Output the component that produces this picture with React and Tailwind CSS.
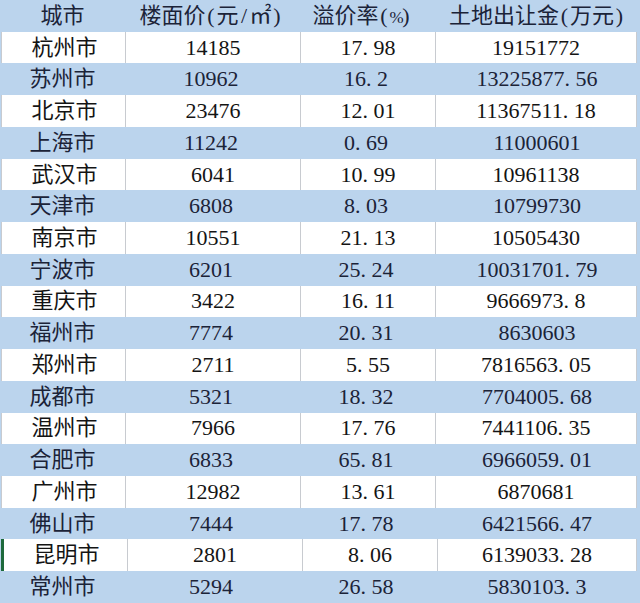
const rows = [
  ['杭州市', '14185', '17.98', '19151772'],
  ['苏州市', '10962', '16.2', '13225877.56'],
  ['北京市', '23476', '12.01', '11367511.18'],
  ['上海市', '11242', '0.69', '11000601'],
  ['武汉市', '6041', '10.99', '10961138'],
  ['天津市', '6808', '8.03', '10799730'],
  ['南京市', '10551', '21.13', '10505430'],
  ['宁波市', '6201', '25.24', '10031701.79'],
  ['重庆市', '3422', '16.11', '9666973.8'],
  ['福州市', '7774', '20.31', '8630603'],
  ['郑州市', '2711', '5.55', '7816563.05'],
  ['成都市', '5321', '18.32', '7704005.68'],
  ['温州市', '7966', '17.76', '7441106.35'],
  ['合肥市', '6833', '65.81', '6966059.01'],
  ['广州市', '12982', '13.61', '6870681'],
  ['佛山市', '7444', '17.78', '6421566.47'],
  ['昆明市', '2801', '8.06', '6139033.28'],
  ['常州市', '5294', '26.58', '5830103.3'],
];

/* half-width cell, like the SimSun glyphs in the sheet */
const Half = ({ children, className = '' }) => (
  <span className={`inline-block w-[11px] text-center ${className}`}>{children}</span>
);

/* numbers: the period takes a full half-width cell */
const Num = ({ value }) => {
  const [a, b] = value.split('.');
  return (
    <span>
      {a}
      {b !== undefined && (
        <>
          <span className="inline-block w-[11px] text-left">.</span>
          {b}
        </>
      )}
    </span>
  );
};

const Row = ({ cells, blue, selected }) => {
  const text = blue ? 'text-[#1b2338]' : 'text-[#141414]';
  const line = blue ? 'border-transparent' : 'border-[#c8cbd0]';
  return (
    <div
      className={`flex-1 min-h-0 grid grid-cols-[124px_175px_135px_1fr] items-center ${text} ${
        blue ? '' : 'bg-white ml-[1px] mr-[3px] border-l border-r border-[#c8cbd0]'
      } ${selected ? 'border-l-[3px] border-l-[#1d6a3c] ml-0' : ''}`}
    >
      {cells.map((c, i) => (
        <div
          key={i}
          className={`h-full flex items-center justify-center ${i < 3 ? `border-r ${line}` : ''}`}
        >
          {c}
        </div>
      ))}
    </div>
  );
};

export default function App() {
  return (
    <div
      className="w-[640px] h-[603px] bg-[#bbd4ed] flex flex-col overflow-hidden text-[22px] leading-none"
      style={{ fontFamily: '"Liberation Serif", "Noto Sans CJK SC", serif' }}
    >
      <Row
        blue
        cells={[
          <span key="a" className="pl-[2px]">城市</span>,
          <span key="b">
            楼面价<Half>(</Half>元<Half>/</Half>㎡<Half>)</Half>
          </span>,
          <span key="c" className="-ml-[8px]">
            溢价率<Half>(</Half>
            <Half className="text-[17px]">%</Half>
            <Half>)</Half>
          </span>,
          <span key="d">
            土地出让金<Half>(</Half>万元<Half>)</Half>
          </span>,
        ]}
      />
      {rows.map((r, i) => (
        <Row
          key={r[0]}
          blue={i % 2 === 1}
          selected={r[0] === '昆明市'}
          cells={[
            <span key="a" className="pl-[2px]">{r[0]}</span>,
            <Num key="b" value={r[1]} />,
            <Num key="c" value={r[2]} />,
            <Num key="d" value={r[3]} />,
          ]}
        />
      ))}
    </div>
  );
}
